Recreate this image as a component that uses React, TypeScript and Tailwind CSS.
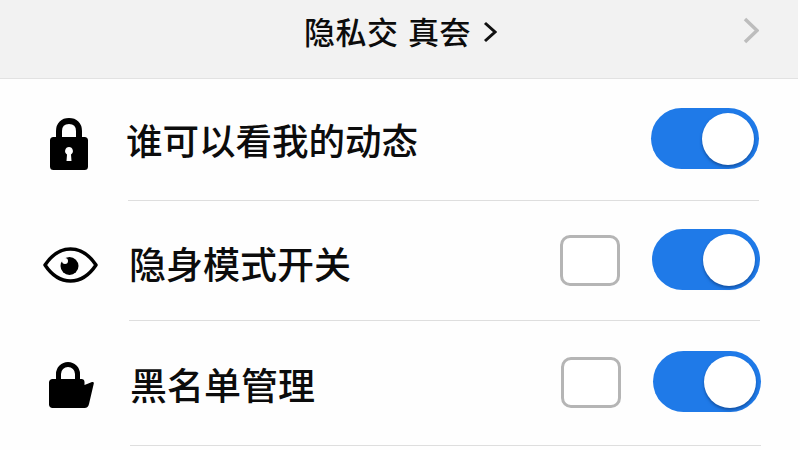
const FONT = "font-['Noto_Sans_CJK_SC','Noto_Sans',sans-serif]";

function LockIcon() {
  return (
    <svg width="38" height="52" viewBox="0 0 38 52" className="block">
      <path d="M9 22V13C9 6.600 13 3 19 3s10 3.600 10 10v9" fill="none" stroke="#000" strokeWidth="6" />
      <path
        fillRule="evenodd"
        d="M3.500 19h31a3.500 3.500 0 0 1 3.500 3.500v26a3.500 3.500 0 0 1-3.500 3.500h-31A3.500 3.500 0 0 1 0 48.500v-26A3.500 3.500 0 0 1 3.500 19zM19 29a4 4 0 0 0-2 7.400L16.500 43h5l-.5-6.600A4 4 0 0 0 19 29z"
        fill="#000"
      />
    </svg>
  );
}

function EyeIcon() {
  return (
    <svg width="56" height="36" viewBox="0 0 56 36" className="block">
      <path d="M2 18C9 7.500 18 2 27.500 2S46 7.500 53 18C46 28.500 37 34 27.500 34S9 28.500 2 18z" fill="none" stroke="#000" strokeWidth="3.500" strokeLinejoin="round" />
      <circle cx="26.500" cy="19" r="9" fill="#000" />
      <circle cx="22" cy="14" r="3" fill="#fff" />
    </svg>
  );
}

function BagLockIcon() {
  return (
    <svg width="45" height="47" viewBox="0 0 45 47" className="block">
      <path d="M9.500 20V12a9.500 9.500 0 0 1 19 0v8" fill="none" stroke="#000" strokeWidth="5" />
      <path d="M3.500 17h29c1.800 0 3 1.200 3 3v3l7.500-3c1.300-.4 2 .4 1.800 1.500L40 42c-.6 2.500-2 4-4.500 4h-32C1.500 46 0 44.500 0 42.500v-22C0 18.500 1.500 17 3.500 17z" fill="#000" />
    </svg>
  );
}

function Toggle() {
  return (
    <div className="relative w-[108px] h-[61px] shrink-0 rounded-full bg-[#1f7ae8]">
      <div className="absolute left-[51px] top-[5px] w-[52px] h-[52px] rounded-full bg-white shadow-[0_2px_3px_rgba(10,50,110,0.55)]" />
    </div>
  );
}

function Checkbox() {
  return <div className="mt-[2px] w-[60px] h-[51px] shrink-0 rounded-[10px] border-[3px] border-[#b5b5b5] bg-white" />;
}

export default function App() {
  return (
    <div className={`w-[800px] h-[450px] overflow-hidden bg-[#fefefe] text-[#0c0c0c] ${FONT}`}>
      <header className="relative flex w-[798px] h-[79px] items-center justify-center pb-[15px] pl-[3px] bg-[#f2f2f2] border-b border-[#e2e2e2] text-[31px] font-medium tracking-[0.5px] [word-spacing:2px]">
        <span>隐私交 真夽</span>
        <svg width="14" height="22" viewBox="0 0 14 22" className="ml-[12px]">
          <path d="M2 2l10 9-10 9" fill="none" stroke="#111" strokeWidth="3" />
        </svg>
        <svg width="16" height="27" viewBox="0 0 16 27" className="absolute left-[743px] top-[17px]">
          <path d="M2 2l12 11.500L2 25" fill="none" stroke="#bdbdbd" strokeWidth="3.500" />
        </svg>
      </header>

      <div className="flex h-[122px] items-center pr-[41px]">
        <div className="flex w-[128px] shrink-0 justify-center pl-[10px] pt-[7px]">
          <LockIcon />
        </div>
        <div className="flex h-full flex-1 items-center justify-between border-b border-[#dedede] pb-[2px]">
          <span className="mt-[4px] -ml-[2px] text-[36.500px] font-medium leading-none">谁可以看我的动态</span>
          <Toggle />
        </div>
      </div>

      <div className="flex h-[120px] items-center pr-[40px]">
        <div className="flex w-[129px] shrink-0 justify-center pl-[13px] pt-[8px]">
          <EyeIcon />
        </div>
        <div className="flex h-full flex-1 items-center border-b border-[#dedede] pb-[2px]">
          <span className="mt-[7px] flex-1 text-[37px] font-medium leading-none">隐身模式开关</span>
          <div className="flex items-center gap-[32px]">
            <Checkbox />
            <Toggle />
          </div>
        </div>
      </div>

      <div className="flex h-[125px] items-center pr-[39px]">
        <div className="flex w-[130px] shrink-0 justify-center pl-[13px] pt-[3px]">
          <BagLockIcon />
        </div>
        <div className="flex h-full flex-1 items-center border-b border-[#dedede] pb-[4px]">
          <span className="mt-[6px] flex-1 text-[37px] font-medium leading-none">黑名单管理</span>
          <div className="flex items-center gap-[32px]">
            <Checkbox />
            <Toggle />
          </div>
        </div>
      </div>
    </div>
  );
}
